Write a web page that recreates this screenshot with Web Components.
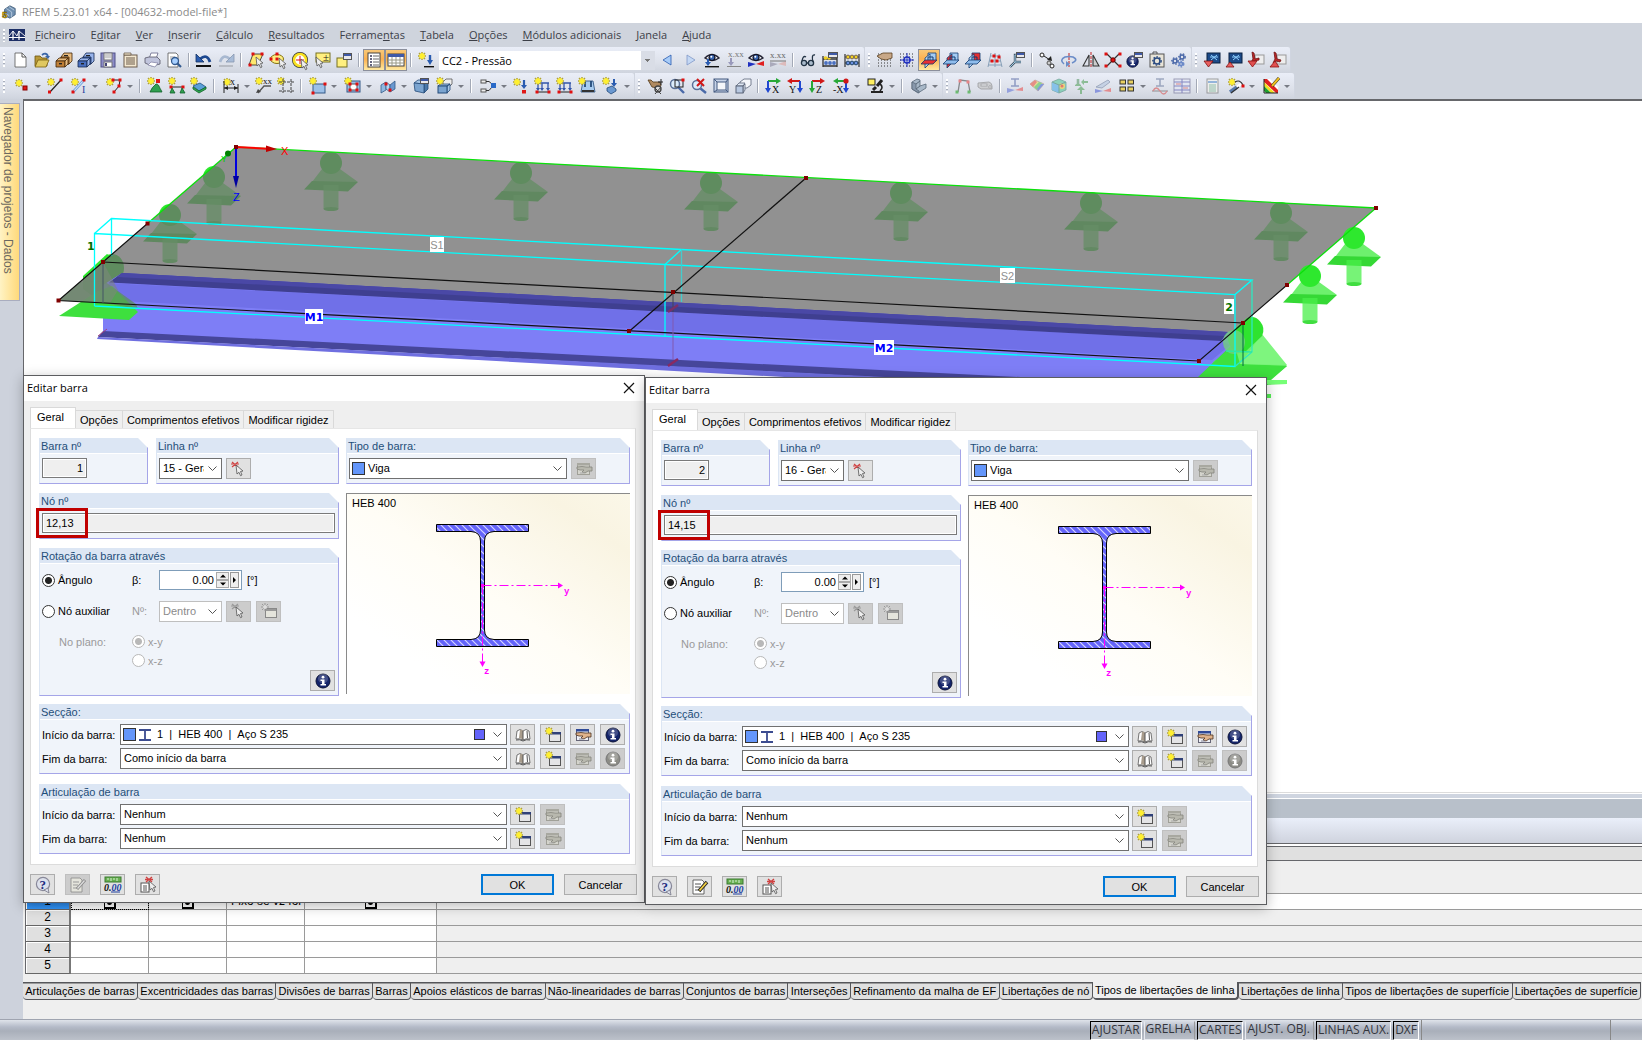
<!DOCTYPE html>
<html lang="pt">
<head>
<meta charset="utf-8">
<title>RFEM 5.23.01 x64 - [004632-model-file*]</title>
<style>
html, body { margin: 0; height: 100%; }
body { font: 11px/14px "Liberation Sans", Arial, sans-serif; color: #000; overflow: hidden; }
</style>
</head>
<body>
<rfem-app></rfem-app>
<script>
/* ---------- icon drawing helpers (16 x 16 grid) ---------- */
const R = (x, y, w, h, f, s = 'none', sw = 1) => `<rect x="${x}" y="${y}" width="${w}" height="${h}" fill="${f}" stroke="${s}" stroke-width="${sw}"/>`;
const P = (d, s, w = 1, f = 'none', e = '') => `<path d="${d}" fill="${f}" stroke="${s}" stroke-width="${w}" ${e}/>`;
const F = (d, f, s = 'none') => `<path d="${d}" fill="${f}" stroke="${s}" stroke-width=".8"/>`;
const C = (x, y, r, f, s = 'none', w = 1) => `<circle cx="${x}" cy="${y}" r="${r}" fill="${f}" stroke="${s}" stroke-width="${w}"/>`;
const star = (x = 4, y = 4) => `<g transform="translate(${x} ${y})">${P('M0-4V4M-4 0H4M-3-3L3 3M3-3L-3 3', '#b0a238', 1.5)}${P('M0-3V3M-3 0H3M-2-2L2 2M2-2L-2 2', '#fff030', 1.6)}</g>`;
const dot = (x, y, f = '#e01010') => R(x - 1.5, y - 1.5, 3, 3, f);
const cursor = (x = 8, y = 5) => `<path transform="translate(${x} ${y})" d="M0 0L7 6L4.5 6.5L6 10L4.5 10.7L3 7.3L1 9Z" fill="#eee" stroke="#555" stroke-width=".8"/>`;
const T = (x, y, t, f, s = 8) => `<text x="${x}" y="${y}" fill="${f}" font-family="Liberation Serif,serif" font-size="${s}">${t}</text>`;
const grid = c => P('M1 2H16M1 5H16M1 8H16M1 11H16M1 14H16', c, 1, 'none', 'stroke-dasharray="1 2"');
const cabinet = (a, b, d) => F('M5 5L8 1H16V9L13 12H5Z', a, d) + F('M5 5H13V12H5Z', b, d) + F('M0 9L3 6H12L10 9Z', a, d) + F('M0 9H9V15H0Z', b, d) + F('M9 9L12 6V12L9 15Z', a, d) + R(8, 3, 4, 1.2, '#222') + R(3, 11, 3, 1.4, '#222');
const eye = P('M1 6Q8-1 15 6Q8 11 1 6Z', '#223', 1.4, '#fff') + C(8, 5.5, 3, '#3a66b0', '#112', 1.2) + C(7.3, 4.8, 1, '#fff');
const planes = (red = '') => F('M7 1H15V9H7Z', red === 'c' ? '#e83030' : '#a4ccf4', '#123a70') + F('M4 6L9 2V11L4 16Z', red === 'b' ? '#e83030' : '#b8daf8', '#123a70') + F('M0 12L4 8H16L12 12Z', red === 'a' ? '#e83030' : '#8ebcec', '#123a70') + P('M7 8V5H12V8', '#123a70');
const win = (x, y, w, h) => R(x + .5, y + .5, w, h, '#e8e8ec', '#555') + R(x + 1, y + 1, w - 1, 2, '#3f5aa8');
const loads = P('M2 5H14M3 5V11M7 5V11M13 5V11', '#3355aa', 1.3) + F('M1 10H5L3 13ZM5 10H9L7 13ZM11 10H15L13 13Z', '#3355aa') + P('M1 14H15', '#222') + dot(2, 14) + dot(14, 14);
const info = (a, b) => C(8, 8, 7, a, b) + `<circle cx="8" cy="5.5" r="5" fill="#fff" opacity=".2"/>` + C(8, 4.2, 1.4, '#fff') + F('M5.5 6.5H9.5V11H11V12.5H5.5V11H7V8H5.5Z', '#fff');
const gear = (x, y, r, f) => C(x, y, r, 'none', f, 1.6) + `<circle cx="${x}" cy="${y}" r="${r + 1.2}" fill="none" stroke="${f}" stroke-width="1.3" stroke-dasharray="1.6 1.5"/>`;
const hand = g => R(1.5, 2.5, 12, 11, g ? '#d4d4cc' : '#eef0f6', g ? '#a0a098' : '#667') + R(1, 2, 13, 2.5, g ? '#a8a8a0' : '#2f4a98') + F('M1 6L6 5.500L10 6L16 6V10L12 10L9 12L6 11L8 9L4 9L1 8Z', g ? '#b8b8ae' : '#e0b48c', g ? '#84847c' : '#4a3020') + P('M4 12H8', g ? '#aaa' : '#889');
const axes = (t, c1, c2) => P('M3 3H14', c1, 2) + F('M11 0L16 3L11 6Z', c1) + P('M3 3V13', c2, 2) + F('M0 10H6L3 15Z', c2) + T(7, 15, t, '#111', 10);

const ICONS = {
  app: F('M3 5L9 1L15 4V11L9 15L3 12Z', '#6f8fb0', '#34506c') + P('M5 4L11 8V14M8 2L14 6M3 9L8 12', '#b8cce0') + `<text x="0" y="15" fill="#f4c800" stroke="#443800" stroke-width=".5" font-family="Liberation Sans" font-weight="bold" font-size="11">5</text>`,
  bridge: R(0, 2, 16, 12, '#1d2f66') + P('M0 10.500H16M4 4V13M10 4V13', '#fff', 1.2) + P('M0 9L4 4L8 9L10 4L16 9', '#fff', .9),
  doc: F('M3 1H10L14 5V15H3Z', '#fff', '#555') + P('M10 1V5H14', '#555'),
  open: F('M1 4H6L8 6H13V14H1Z', '#b89838', '#6a5410') + F('M1 15L4 8H15L12 15Z', '#e0c860', '#7a6010') + P('M8 3Q12 0 14 4', '#3a66a8', 1.8) + F('M11 4H16L14 7Z', '#3a66a8'),
  cabB: cabinet('#e8bc80', '#c08038', '#402408'), cabU: cabinet('#98b4ec', '#4a70c0', '#142850'),
  save: R(1, 1, 14, 14, '#8c8cc8', '#505088') + R(4, 1, 8, 7, '#eee', '#777') + P('M5 3H11M5 5H11', '#aaa') + R(4, 10, 8, 5, '#fff', '#777') + R(5, 11, 2, 3, '#447'),
  notes: R(2, 3, 13, 12, '#f4e8d0', '#6a5a4a') + F('M2 3V1H9V3Z', '#f4e8d0', '#6a5a4a') + P('M4 6H13M4 8H13M4 10H13M4 12H13', '#6a5a4a'),
  print: F('M5 7L7 1H14L12 7Z', '#fff', '#668') + F('M1 6L5 5H13L16 8V12L8 14L1 11Z', '#c0c4dc', '#556') + F('M7 10L14 11L11 15L4 13Z', '#fff', '#88a'),
  preview: F('M2 1H10L12 3V15H2Z', '#fff', '#555') + P('M4 5H9M4 7H8', '#999') + C(9, 9, 3.5, '#a8d0ff', '#335a90', 1.3) + P('M11 11L15 15', '#335a90', 2.2),
  undo: P('M4 7Q11 1 14 10', '#1c4890', 2.8) + F('M0 2V10H8Z', '#2a5cb0', '#123060') + R(0, 13, 15, 2, '#111'),
  redo: P('M12 7Q5 1 2 10', '#a8b8d0', 2.6) + F('M16 2V10H8Z', '#a8bcd8', '#8898b0') + R(1, 13, 14, 2, '#b8bcc4'),
  selpar: F('M5 2H15L10 13H1Z', '#ffe870', '#222') + dot(5, 2) + dot(14, 2) + dot(2, 13) + cursor(8, 5),
  selell: `<ellipse cx="7" cy="7" rx="6.5" ry="4.5" fill="#ffee80" stroke="#807010"/>` + dot(1, 7) + dot(7, 2) + dot(7, 7) + cursor(9, 6),
  selring: C(8, 8, 6, 'none', '#333', 4) + C(8, 8, 6, '#fff', '#f8e020', 2.6) + P('M8 4V12M4 8H12', '#e01010') + cursor(9, 7),
  selrect: R(2, 1, 14, 9, '#fff080', '#777020') + T(9, 9, '±', '#111', 11) + cursor(2, 5),
  selwin: R(1, 6, 10, 9, '#fff080', '#777020') + win(7, 1, 8, 6),
  panelA: R(2, 1, 12, 14, '#fff', '#444') + P('M4 4H6M4 7H6M4 10H6M4 13H6', '#335', 1.4) + P('M7 4H13M7 7H13M7 10H13M7 13H13', '#666'),
  panelB: R(0, 2, 16, 12, '#fff', '#444') + R(0, 2, 16, 3, '#3f5aa8') + P('M0 8H16M0 11H16M4 5V14M8 5V14M12 5V14', '#998'),
  newload: star(4, 4) + P('M12 3V10', '#2a5cb0', 2.4) + F('M9 8H15L12 13Z', '#2a5cb0') + R(6, 14, 10, 1.4, '#111'),
  prev: F('M11 3V13L3 8Z', '#a8ccf8', '#2a5cb0'), next: F('M5 3V13L13 8Z', '#c4d8f4', '#8098c8'),
  eyeload: eye + P('M4 7V12', '#2a5cb0', 2) + F('M1 10H7L4 14Z', '#2a5cb0') + R(1, 14, 14, 1.4, '#111'),
  xxxload: T(2, 5, 'x.xx', '#777', 9) + P('M5 6V12', '#99b', 2) + F('M2 10H8L5 14Z', '#99b') + R(1, 14, 14, 1, '#888'),
  eyeres: eye + F('M0 10V15L8 12Z', '#2030c0') + F('M8 12L16 9V14Z', '#e02020'),
  xxxres: T(0, 6, 'x.xx', '#666', 9) + F('M0 10V15L8 12Z', '#aab') + F('M8 12L16 9V14Z', '#dbb') + P('M0 9H16', '#777'),
  glasses: C(4, 11, 2.6, '#abc', '#234', 1.3) + C(11, 11, 2.6, '#abc', '#234', 1.3) + P('M2 9Q3 3 6 5M13 10Q11 2 15 3M6 11H9', '#234', 1.3),
  abac1: P('M1 4V15M15 6V15M1 7H15M1 14H15', '#333', 1.3) + C(3.5, 6, 1.8, '#f0d020') + C(7, 6, 1.8, '#f0d020') + C(4, 11, 1.9, '#4a70c0') + C(8, 11, 1.9, '#4a70c0') + C(12, 11, 1.9, '#4a70c0') + win(6, 0, 9, 5),
  abac2: P('M1 2V15M15 2V15M1 5H15M1 11H15', '#333', 1.2) + C(4, 5, 1.9, '#f0d020', '#765') + C(8, 5, 1.9, '#f0d020', '#765') + C(12, 5, 1.9, '#f0d020', '#765') + C(4, 11, 1.9, '#6a90e0', '#246') + C(8, 11, 1.9, '#6a90e0', '#246') + C(12, 11, 1.9, '#6a90e0', '#246'),
  handgrid: grid('#333') + F('M0 4L6 1L15 1V6L9 8L4 7Z', '#c8a888', '#5a4020'),
  snap: grid('#333') + C(8, 8, 3, '#e8eef8', '#2030c0', 1.6) + P('M8 1V15M1 8H15', '#2030c0'),
  plA: planes('a'), plB: planes('b'), plC: planes('c'),
  gridp: P('M4 1L1 15M8 1V15M12 2L15 15M3 4H13M2 9H14M1 13H15', '#88a0b8') + dot(7, 4) + dot(5, 9) + dot(10, 9) + dot(12, 5),
  wrench: P('M1 15L6 10V3H9M6 10H12', '#456', 2.4) + P('M1 15L6 10V3H9M6 10H12', '#9bc8e0', 1) + win(7, 0, 8, 5),
  mvcopy: C(3, 3, 2, '#fff', '#222') + P('M5 4L11 8', '#222') + F('M13 9L8 8L12 4Z', '#222') + C(10, 11, 2, '#ccc', '#555') + C(13, 14, 2, '#fff', '#222'),
  rotate: P('M8 1V15', '#c02020', 1, 'none', 'stroke-dasharray="3 1"') + P('M3 12Q-2 8 4 5Q8 4 12 5Q18 8 11 11', '#6a8cc8', 1.6) + F('M5 9V15L9 12Z', '#6a8cc8'),
  mirror: P('M8 0V16', '#c02020', 1, 'none', 'stroke-dasharray="3 1"') + P('M0 14L6 3V14Z', '#333', 1.1) + P('M16 14L10 3V14Z', '#333', 1.1, '#ccc'),
  xlines: P('M2 2L14 14M14 2L2 14', '#333', 1.2) + dot(1, 2) + dot(15, 2) + dot(1, 14) + dot(15, 14) + C(8, 8, 2.2, '#e01010', '#600'),
  infow: `<g transform="translate(-1 3) scale(.82)">${info('#14246a', '#0a1238')}</g>` + win(7, 0, 8, 5),
  camera: R(1, 2, 14, 13, '#e8e4d8', '#555') + P('M4 2V0H8V2', '#555') + gear(8, 9, 3, '#2a4a80'),
  gears: gear(4, 9, 2, '#4a68a8') + gear(11, 5, 2, '#4a68a8') + gear(10, 12, 1.6, '#6a88c8'),
  scrA: R(3, 1, 13, 10, '#1c4a88', '#0a2040') + P('M7 3L13 8M13 3L7 8M6 5H14', '#8fd0ff') + F('M0 9H9L4.500 15Z', '#e86060', '#801010'),
  scrB: R(3, 1, 13, 10, '#1c4a88', '#0a2040') + P('M7 3L13 8M13 3L7 8M6 5H14', '#8fd0ff') + F('M0 15H8L4 10Z', '#e86060', '#801010'),
  pdfA: R(7, 3, 9, 9, '#eee', '#999') + F('M4 0L6 1L7 7L11 6L11 8L6 9L3 10L5 7Z', '#c02828', '#701010') + F('M0 9H9L4.500 15Z', '#e05050', '#901010'),
  pdfB: R(7, 3, 9, 9, '#eee', '#999') + F('M4 0L6 1L7 7L11 8L10 10L6 9L3 11L5 7Z', '#c02828', '#701010') + F('M0 15H9L5 9Z', '#e05050', '#901010'),

  node: star(5, 5) + R(9, 8, 4, 4, '#e01818', '#800'),
  line: star() + P('M3 14L14 2', '#222', 1.2) + dot(2.5, 14) + dot(14, 2),
  member: star() + P('M2 14L13 2', '#7aa8e0', 2.6) + P('M2 14L13 2', '#fff', .8) + dot(2, 14) + dot(13, 2) + T(11, 15, 'I', '#2040a0', 10),
  polyl: star() + P('M7 2H14L13 8L8 14', '#222') + dot(7, 2) + dot(14, 2) + dot(13, 8) + dot(8, 14),
  nsup: star(4, 3) + R(9, 1, 4, 4, '#e01818') + F('M9 6C12 6 12 9 14 12L15 14H3Q5 9 9 6Z', '#30a050', '#106028'),
  lsup: star(3, 3) + P('M3 9H14', '#222') + dot(2, 9) + dot(14, 9) + F('M1 15L3 10L6 15ZM11 15L13 10L16 15Z', '#30a050', '#106028'),
  ssup: star(3, 3) + F('M2 8L9 5L15 9L8 13Z', '#5aa0d8', '#205080') + F('M2 9L8 13L15 9V11L8 15L2 11Z', '#30b050', '#106028'),
  dim: star(4, 4) + P('M1 3V15M15 6V15M1 10H15', '#222') + F('M1 10L5 8V12ZM15 10L11 8V12Z', '#222') + T(7, 7, 'x', '#111', 10),
  slope: star(3, 3) + T(7, 6, 'xx', '#111', 9) + P('M15 8L8 8L2 15', '#555', 1.3) + F('M0 15L2 11L5 14Z', '#444'),
  guides: star(3, 3) + P('M5 1V15M13 1V15M1 4H16M1 13H16', '#444', 1, 'none', 'stroke-dasharray="3 1"'),
  surf: R(3, 6, 12, 9, '#9cc0e8', '#345a88') + star(3, 3) + dot(15, 6) + dot(3, 15),
  opening: R(2, 3, 13, 11, '#9cc0e8', '#345a88') + R(5, 6, 7, 6, '#fff', '#555') + star(3, 3) + dot(5, 6) + dot(12, 6) + dot(5, 12) + dot(12, 12),
  inters: F('M1 7L6 4V12L1 15Z', '#8fb8e0', '#345a88') + F('M6 4L10 7V14L6 11Z', '#b8d4f0', '#345a88') + F('M10 7L15 3V11L10 14Z', '#6a98d0', '#345a88') + dot(6, 6) + dot(10, 12),
  solid: F('M1 5L5 2H15L11 6Z', '#a8c8e8', '#234a78') + F('M11 6L15 2V11L11 15Z', '#4a78a8', '#234a78') + F('M1 5L11 6V15L2 13Z', '#7aa4d0', '#234a78') + win(7, 0, 8, 5),
  solidset: F('M6 4L9 1H15V6L12 9H6Z', '#eee', '#555') + F('M1 8L3 6H13L10 8ZM10 8L13 6V12L10 15Z', '#a8c8e8', '#234a78') + R(1, 8, 9, 7, '#7aa4d0', '#234a78') + star(3, 3),
  combo1: R(1, 2, 5, 3, '#eee', '#555') + R(1, 11, 5, 3, '#eee', '#555') + P('M6 3.5H9L12 6M6 12.5H9L12 9', '#333') + R(11, 5, 5, 5, '#2a6ac8'),
  nload: star(4, 4) + P('M11 2V9', '#2a5cb0', 2.2) + F('M8 7H14L11 11Z', '#2a5cb0') + R(9, 12, 4, 3.5, '#e01818'),
  mload: loads + star(3, 3), lload: loads + star(3, 3),
  sload: F('M4 3H14L16 14H2Z', '#a8ccf0', '#234a78') + P('M6 3V9M12 3V9', '#234a78', 1.8) + R(3, 12, 12, 2, '#333') + star(3, 3),
  bload: star(3, 3) + P('M11 1V6', '#2a5cb0', 2) + F('M8 5H14L11 9Z', '#2a5cb0') + F('M4 10L9 8L13 11V13L8 16L4 13Z', '#6a98d0', '#234a78'),
  pan: F('M1 2L4 2L6 4L13 4L14 8L11 10L5 9Z', '#b08a60', '#503818') + P('M14 1V7M11 4H16', '#222') + C(11, 11, 3, '#ddd', '#444', 1.4) + P('M7 9L14 16M14 9L8 16', '#444'),
  zoomw: C(6, 6, 4.5, '#dcecfc', '#5a7098', 1.5) + P('M9.5 9.5L15 15', '#4a6aa8', 2.4) + R(6, 2, 8, 7, 'none', '#222') + dot(14, 2),
  zoomx: C(6, 7, 4.5, '#dcecfc', '#5a7098', 1.5) + P('M9.5 10.5L15 15', '#4a6aa8', 2.4) + P('M6 1L13 8M13 1L6 8', '#d01818', 2),
  persp: R(1, 1, 14, 13, '#c8d4e8', '#445a80') + R(4, 4, 9, 8, '#f4f6fa', '#445a80') + P('M1 1L4 4M15 1L13 4M1 14L4 12M15 14L13 12', '#445a80'),
  layers: F('M5 4L9 1H16V7L12 10H5Z', '#f4f6fa', '#5a6478') + F('M1 8L4 5H10L8 8ZM8 8L10 6V12L8 15Z', '#e0e8f4', '#5a6478') + R(1, 8, 7, 7, '#b8c8e0', '#5a6478'),
  vx: axes('X', '#28a838', '#2048d0'),
  vy: P('M3 3H13', '#d01818', 2) + F('M5 0L0 3L5 6Z', '#d01818') + P('M13 3V13', '#2048d0', 2) + F('M10 10H16L13 15Z', '#2048d0') + T(2, 15, 'Y', '#111', 10),
  vz: axes('Z', '#d01818', '#28a838'),
  vmx: P('M3 3H13', '#28a838', 2) + F('M5 0L0 3L5 6Z', '#28a838') + P('M13 3V13', '#2048d0', 2) + F('M10 10H16L13 15Z', '#2048d0') + C(13, 3, 2.6, '#d01818') + T(0, 15, '-X', '#111', 10),
  micro: R(0, 1, 7, 6, '#fff060', '#222') + P('M14 2L9 8M8 9L5 12', '#222', 3) + R(3, 13, 12, 2, '#222') + P('M12 6Q16 9 12 13', '#222', 1.6),
  section3d: F('M1 4L6 1L9 2V8L15 6V10L7 15L1 11Z', '#a8b8c8', '#5a6a7a') + F('M1 4L5 6V11L8 13V15L1 11Z', '#8898ac', '#5a6a7a') + P('M5 6L9 3M5 11L9 8', '#5a6a7a'),
  frame: P('M3 14L5 2L13 3L15 14', '#555', 1.3) + dot(5, 3, '#e85050') + dot(13, 4, '#e85050') + dot(2, 14, '#3a3') + dot(14, 14, '#3a3'),
  tape: F('M1 5L12 4Q15 5 15 8V11H4L1 9Z', '#c4c4c4', '#777') + R(4, 6, 6, 2, '#f4f4f4', '#888') + C(13, 9, 1.3, '#eee', '#888'),
  resI: P('M4 1H12M4 8H12M8 1V8', '#6a7ab0', 1.6) + F('M0 10V15L8 12Z', '#7080d8') + F('M8 12L16 9V13Z', '#e86060'),
  rainbow: F('M1 6L6 2L15 6L9 13Z', '#f0d860', '#a88') + F('M1 6L6 2L8 4L4 9Z', '#e86050') + F('M5 9L10 4L13 5L8 12Z', '#60c860') + F('M9 13L15 6L12 6L8 11Z', '#5070d8'),
  cubeR: F('M1 4L8 1L15 4V12L8 15L1 12Z', '#60c8a0', '#487') + F('M1 4L8 7V15L1 12Z', '#58b0e8') + C(11, 8, 3, '#f0d040') + C(11, 8, 1.5, '#e04030') + P('M8 7V15M1 4L8 7L15 4', '#487'),
  reac: P('M5 1V7', '#6aa078', 2.6) + F('M2 7Q5 4 8 7V8H2Z', '#60a868') + F('M8 8L12 12H9V16H7V12H4Z', '#60a868') + F('M8 4L11 1V3H15V5H11V7Z', '#60a868'),
  resl: F('M1 9L13 2L15 4L7 10Z', '#b8c8e0', '#6a7a98') + F('M0 11V15L8 13Z', '#6070d8') + F('M8 13L16 10V14Z', '#e86060'),
  quad: [[1, 2], [9, 2], [1, 9], [9, 9]].map(a => R(a[0], a[1], 5.5, 4, '#e8d060', '#333')).join(''),
  resw: P('M4 1H12M4 8H12M8 1V8', '#7a88a8', 1.6) + P('M0 13H16', '#666') + P('M1 13Q4 7 8 13T15 13', '#d86060', 1.3),
  tabl: R(0, 1, 16, 14, '#e4e8f4', '#779') + P('M0 4H16M0 8H16M0 12H16M8 1V15', '#55a') + P('M2 6H7M9 10H14', '#d88', 1.4),
  report: R(3, 1, 11, 14, '#f4f4ec', '#777') + R(4, 3, 9, 2, '#6a9ad0') + P('M5 7H12M5 9H12M5 11H12M5 13H12', '#6a8'),
  brush: star() + P('M2 14L9 9', '#5a7aa8', 3.4) + P('M9 9L13 6', '#fff', 2.4) + P('M7 4Q12 1 15 7M3 15L11 9', '#333', 1.2) + dot(15, 8),
  spectrum: R(1, 1, 14, 14, '#fff') + F('M1 1H4L15 12V15H13L1 4Z', '#e02020') + F('M1 4L12 15H8L1 8Z', '#f0e020') + F('M1 8L8 15H3L1 13Z', '#20a030') + F('M7 1H16V10Z', '#e8ecf4') + P('M1 1V15H15', '#222') + P('M16 0L9 8', '#222', 3) + P('M16 0L9 8', '#f0c020', 2),

  pick: P('M1 1L7 6M7 1L1 6M0 3H8', '#d04040', 1.1) + cursor(5, 4),
  pickG: P('M1 1L7 6M7 1L1 6M0 3H8', '#999', 1.1) + cursor(5, 4),
  hand: hand(false), handG: hand(true),
  neww: R(4.5, 5.5, 11, 9, '#e4e4e6', '#555') + R(4, 5, 12, 2.5, '#2f4078') + star(4, 4),
  newwG: R(4.5, 5.5, 11, 9, '#e4e4dc', '#888') + R(5, 6, 10, 2, '#999') + P('M4 0V8M0 4H8M1 1L7 7M7 1L1 7', '#999') + C(4, 4, 2, '#ddd'),
  book: F('M1 12L2 4Q5 1 8 4Q11 1 14 4L15 12Q11 11 8 13Q5 11 1 12Z', '#fff', '#555') + F('M8 4Q7 2 5 3L4 11Q6 11 8 13Z', '#a89c8c') + P('M8 4V13', '#555') + P('M12 4L12.500 11M1 13Q5 12 8 14Q11 12 15 13', '#555'),
  info: info('#14246a', '#0a1238'), infoG: info('#8c8c86', '#777'),
  help: C(8, 7, 6.6, '#dce0ec', '#889', 1.2) + F('M9 13L14 16L13 11Z', '#dce0ec', '#778') + `<text x="4.500" y="11.500" fill="#1c2c80" font-family="Liberation Serif" font-weight="bold" font-size="13">?</text>`,
  edit: F('M1 1H10L12 3V15H1Z', '#fff', '#444') + P('M3 5H9M3 8H8M3 11H7', '#555') + P('M7 12L15 3', '#222', 3.4) + P('M7.5 11.5L14.5 3.5', '#f4d040', 1.8),
  editG: F('M1 1H10L12 3V15H1Z', '#e4e4dc', '#888') + P('M3 5H9M3 8H8M3 11H7', '#999') + P('M7 12L15 3', '#888', 3) + P('M7.5 11.5L14.5 3.5', '#ddd', 1.4),
  units: R(0, 0, 16, 5, '#68b050', '#3a7a30') + P('M3 1V3M6 1V4M9 1V3M12 1V4', '#d8f0d8') + `<text x="-1" y="14" fill="#111" font-family="Liberation Serif" font-style="italic" font-weight="bold" font-size="10">0.<tspan fill="#2040a0">00</tspan></text>` + P('M6 15H15', '#2040a0'),
  pickdoc: R(1, 6, 8, 9, '#fff', '#555') + P('M3 9H7M3 11H7M3 13H7', '#555') + P('M6 0L12 5M12 0L6 5M5 2.5H13', '#d04040', 1.3) + cursor(9, 4)
};

/* ---------- base class ---------- */
class Base extends HTMLElement {
  constructor() { super(); this.attachShadow({ mode: 'open' }); }
  connectedCallback() { if (!this.shadowRoot.hasChildNodes()) this.shadowRoot.innerHTML = this.view(); }
}
const def = (n, f) => customElements.define(n, class extends Base { view() { return f(this); } });

def('ui-icon', e => `<style>:host{display:block;width:18px;height:18px;flex:none}svg{display:block;width:100%;height:100%;overflow:visible}</style>
<svg viewBox="-1 -1 18 18" aria-hidden="true">${ICONS[e.getAttribute('name')] || ''}</svg>`);

/* ---------- frame: title, menu, toolbars ---------- */
def('title-bar', () => `<style>:host{display:flex;align-items:center;height:23px;gap:5px;background:#fff;color:#8a8a8a;font:11px/16px "Open Sans",sans-serif}
ui-icon{width:16px;height:16px;margin-left:1px}</style><ui-icon name="app"></ui-icon><span><slot></slot></span>`);

def('menu-bar', () => {
  const m = [['', 'F', 'icheiro'], ['E', 'd', 'itar'], ['', 'V', 'er'], ['', 'I', 'nserir'], ['', 'C', 'álculo'], ['', 'R', 'esultados'], ['Ferrame', 'n', 'tas'], ['', 'T', 'abela'], ['', 'O', 'pções'], ['', 'M', 'ódulos adicionais'], ['', 'J', 'anela'], ['', 'A', 'juda']];
  return `<style>:host{display:flex;align-items:center;height:24px;background:#cfd4dd}
.grip{width:2px;height:13px;margin:0 3px 0 3px;background:repeating-linear-gradient(#fff 0 2px,#b4bac6 2px 3px,#cfd4dd 3px 4px)}
ui-icon{margin-right:2px}nav{display:flex}
button{border:0;background:none;margin:0;padding:0 8px 0 7px;font:11px/20px "Open Sans",sans-serif;color:#3c3f48}</style>
<div class="grip"></div><ui-icon name="bridge"></ui-icon><nav>${m.map(a => `<button>${a[0]}<u>${a[1]}</u>${a[2]}</button>`).join('')}</nav>`;
});

/* items: "|" separator, "name" button, "name+" split button, "name*" pressed, "name-" dimmed */
def('tool-group', e => {
  const one = t => {
    if (t === '|') return '<i class="sep"></i>';
    if (t === 'CASE') return '<select aria-label="Caso de carga"><option>CC2 - Pressão</option></select>';
    const n = t.replace(/[+*\-]+$/, ''), k = t.slice(n.length);
    const cls = (k.includes('+') ? 'split ' : '') + (k.includes('*') ? 'on ' : '') + (k.includes('-') ? 'dim' : '');
    return `<button class="${cls}" aria-label="${n}"><ui-icon name="${n}"></ui-icon>${k.includes('+') ? '<b></b>' : ''}</button>`;
  };
  return `<style>:host{display:flex;align-items:center;height:26px;box-sizing:border-box;padding-right:1px;border-right:1px solid #d0d5e0;border-radius:0 3px 3px 0;background:linear-gradient(#eaeef8,#dde1ea 60%,#cfd4de)}
.grip{width:2px;height:14px;margin:0 4px 0 3px;background:repeating-linear-gradient(#fff 0 2px,#a9afbc 2px 3px,transparent 3px 4px)}
button{display:flex;align-items:center;justify-content:center;box-sizing:border-box;width:22px;height:22px;margin:0;padding:0;border:1px solid transparent;background:none;flex:none}
.split{width:35px;justify-content:flex-start;padding-left:3px;gap:4px}
.on{border-color:#8b8f9c;background:linear-gradient(#f8c878,#fbb050 45%,#ffe9a0)}
.dim ui-icon{opacity:.65}
b{border:3px solid transparent;border-top-color:#777b84;border-bottom:0}
.sep{width:1px;height:14px;margin:0 4px 0 3px;background:#a3a9b6;box-shadow:1px 0 #fff}
select{appearance:none;width:216px;height:19px;margin:0 2px;border:0;border-radius:0;padding:0 20px 0 3px;font:11px/19px "Open Sans",sans-serif;color:#000;
background:linear-gradient(#777,#777) right 6px top 9px/3px 1px no-repeat,linear-gradient(#777,#777) right 5px top 8px/5px 1px no-repeat,linear-gradient(#777,#777) right 7px top 10px/1px 1px no-repeat,linear-gradient(90deg,#fff 202px,#d9dde6 202px)}</style>
<div class="grip"></div>${e.getAttribute('items').split(' ').map(one).join('')}`;
});

def('tool-area', () => `<style>:host{display:block;background:#cfd4dd}div{display:flex}</style>
<div><tool-group items="doc open cabB cabU save notes print preview | undo redo | selpar selell selring selrect selwin | panelA* panelB* | newload CASE prev next eyeload xxxload eyeres xxxres | glasses abac1 abac2"></tool-group>
<tool-group items="handgrid snap plA* plB plC gridp wrench | mvcopy rotate mirror xlines infow camera gears"></tool-group>
<tool-group items="scrA scrB pdfA pdfB"></tool-group></div>
<div><tool-group items="node+ line member+ polyl+ | nsup lsup ssup | dim+ slope guides | surf+ opening+ inters+ solid solidset+ | combo1+ nload mload lload sload bload+"></tool-group>
<tool-group items="pan zoomw zoomx persp layers | vx vy vz vmx+ micro+ | section3d+"></tool-group>
<tool-group items="frame- tape- | resI- rainbow- cubeR- reac- resl- quad+ resw- tabl- | report- brush+ spectrum+"></tool-group></div>`);

/* ---------- side strip ---------- */
def('side-strip', () => `<style>:host{display:block;width:23px;flex:none;background:#cdd2dc}
button{display:block;box-sizing:border-box;margin:4px 0 0;width:20px;height:198px;border:1px solid #a9adbf;border-left:0;padding:3px 4px 0 0;text-align:left;background:linear-gradient(90deg,#fff3c4,#ffd97a);writing-mode:vertical-rl;font:12px/15px "Liberation Sans",sans-serif;color:#6c6860}</style>
<button><slot></slot></button>`);

/* ---------- model view ---------- */
def('model-view', () => {
  const sup = (x, y) => `<g transform="translate(${x} ${y})"><path d="M-9 6H9L27 19H-19Z" fill="#6ef06e"/><path d="M-19 18L27 19L17 28.500L-27 26.500Z" fill="#35d835"/><rect x="-7.500" y="22" width="15" height="24" fill="#4aef4a" opacity=".75"/><ellipse cx="0" cy="46" rx="7.500" ry="2" fill="#40dd40"/><circle r="11" fill="#2ee82e"/></g>`;
  const L = (a, c, w = 1.3) => `<polyline points="${a}" fill="none" stroke="${c}" stroke-width="${w}"/>`;
  const n = (x, y) => `<rect x="${x - 2}" y="${y - 2}" width="4" height="4" fill="#800000"/>`;
  const tag = (x, y, w, t, c, b) => `<rect x="${x}" y="${y}" width="${w}" height="15" fill="#fff"/><text x="${x + w / 2}" y="${y + 12}" text-anchor="middle" fill="${c}" class="${b ? 'b' : ''}">${t}</text>`;
  const top = [0, 1, 2, 3, 4, 5].map(i => sup(331 + 190 * i, 163 + 10 * i)).join('');
  return `<style>:host{display:block;flex:1;min-height:0;box-sizing:border-box;border:solid #66676b;border-width:2px 0 0 1px;background:#fff;overflow:hidden}svg{display:block;width:100%;height:100%}text{font:11px "Liberation Sans",sans-serif}.b{font:bold 11px "DejaVu Sans",sans-serif}</style>
<svg viewBox="24 101 1618 691" preserveAspectRatio="xMinYMin slice">
${sup(214, 177)}${sup(170, 215)}${top}
<ellipse cx="112" cy="268" rx="12" ry="14" fill="#2ee82e"/><path d="M83 289V276L107 254L120 262V275L97 299Z" fill="#2ee82e"/>
<path d="M236 147L1376 208L1199 361L58.500 300.500Z" fill="#6e6e6e" fill-opacity=".76"/>
<path d="M122 273L1228 332L1240 345L1215 390L1200 388L103 336V285Z" fill="#7e7ef6"/>
<path d="M109 283L1222 341L1230 345L1212 360L103 300Z" fill="#7070e8"/>
<path d="M122 273L1228 332L1221 341L109 282.500Z" fill="#3f3f90"/>
<path d="M122 273L1228 332L1224 336L117 277Z" fill="#4a48a6"/>
<path d="M103 331L1200 386V394L98 337Z" fill="#46469a"/><path d="M98 337L1200 393V400L97 339Z" fill="#6f6fe0"/>
<path d="M98 291L112 286L138 312L129 320L59 316Z" fill="#3ee03e"/>
<path d="M59 300L80 282L104 281L136 304L138 309L103 303Z" fill="#5c8f5c" opacity=".75"/>
<path d="M58.500 300.500L103 262L118 290L110 303Z" fill="#7d857d" opacity=".55"/>
${L('236,147 147.500,223.500', '#0be00b')}${L('236,147 1376,208', '#0be00b')}
${sup(1354, 238)}${sup(1310, 276)}
<path d="M1214 361L1260 335L1287 366L1270 380L1262 384H1266L1287 380V384L1267 385V398H1192Z" fill="#5cf05c" opacity=".9"/>
<path d="M1198 377L1234 343L1240 364L1287 366L1271 380L1262 392H1190Z" fill="#3ee03e"/>
<path d="M1240 364L1262 334L1287 365Z" fill="#7ef57e"/>
<path d="M1230 333L1247 318A12 13 0 0 1 1262 336L1245 352A14 13 0 0 1 1230 333Z" fill="#2fe32f"/><ellipse cx="1234" cy="342" rx="11" ry="12" fill="#72cf80" opacity=".8"/>
<rect x="1266" y="380" width="21" height="4" fill="#76ff76"/><rect x="1266" y="394" width="5" height="4" fill="#55f055"/>
${L('1376,208 1287,285', '#0be00b')}
${L('94.500,306 94.500,233.500 665,264.500 1235,294.500 1235,366.500 94.500,306', '#0ff')}
${L('94.500,233.500 111.500,218.500 681.500,249.500 1252,280 1235,294.500', '#0ff')}
${L('111.500,218.500 111.500,256', '#0ff')}${L('665,336 665,264.500 681.500,249.500', '#0ff')}${L('681.500,249.500 681.500,302', '#4cc')}${L('1252,280 1252,352 1235,366.500', '#2ee8c0')}${L('1252,352 1226,351', '#2ee8a0')}
${L('147.500,223.500 58.500,300.500 1199,361 1287,285', '#111', 1.2)}${L('103,262 1243,323', '#111', 1.2)}${L('806,178 629,331.500', '#111', 1.2)}
${L('103,262 103,303', '#456', 1)}${L('673,292 673,312', '#445', 1)}${L('673,312 673,360', '#8058b0', 1)}${L('1243,323 1243,366', '#064', 1)}
${L('668,312 678,305', '#7a3068', 2.5)}${L('668,366 678,359', '#8a2a60', 2.5)}${L('98,336 107,329', '#a04080', 1)}
${n(147.5, 223.5)}${n(58.5, 300.5)}${n(103, 262)}${n(806, 178)}${n(673, 292)}${n(629, 331)}${n(1199, 361)}${n(1243, 323)}${n(1287, 285)}${n(1376, 208)}
${L('236,147 268,148.700', '#f00', 2)}<path d="M266 145.500L277 149L266 152Z" fill="#c00000"/>
${L('236,147 236,180', '#0000e0', 2)}<path d="M233 176H239L236 188Z" fill="#0000a0"/>
<circle cx="228" cy="153.500" r="3" fill="#008000"/>${n(236, 147)}
<text x="281" y="155" fill="#f00">X</text><text x="233" y="201" fill="#00f">Z</text><text x="221" y="162" fill="#0c0" style="font-size:9px">Y</text>
<text x="87" y="250" fill="#007000" class="b">1</text>
${tag(430, 237, 14, 'S1', '#909090')}${tag(1000, 268, 15, 'S2', '#909090')}${tag(305, 309, 18, 'M1', '#00f', 1)}${tag(874, 340, 20, 'M2', '#00f', 1)}${tag(1224, 299, 10, '2', '#007000', 1)}
</svg>`;
});

/* ---------- dock: table with sheet tabs ---------- */
def('data-grid', () => `<style>:host{display:block;padding-left:2px;background:#efefef}
table{width:100%;table-layout:fixed;border-collapse:separate;border-spacing:0;border-top:1px solid #66676b}
th,td{box-sizing:border-box;height:16px;padding:0;font:12px/15px "Liberation Sans",sans-serif;border-bottom:1px solid #9a9a9a;border-right:1px solid #9a9a9a;text-align:center;overflow:hidden;white-space:nowrap}
td{background:#fff}td:last-child{background:#efefef;border-right:0}tbody tr:first-child td:last-child{background:#fff}
thead tr:first-child th{height:14px;background:#e0e0e0;border-bottom:1px solid #66676b;border-right:0}
thead tr:last-child th{height:33px;border-right:0}
tbody th{background:#e0e0e0;border-right:2px solid #777;border-bottom-color:#666;border-left:1px solid #66676b;box-shadow:inset 1px 1px #fff}
tbody tr:first-child th{background:linear-gradient(#1c6ac0,#3298fe)}
td:nth-child(4){text-align:left;padding-left:4px}td.f{outline:1px dotted #000;outline-offset:-1px}
td div{display:flex;justify-content:center}
input{appearance:none;display:block;box-sizing:border-box;width:12px;height:12px;margin:2px 0 0;border:1px solid #000;border-width:1px 2px 2px 1px;background:radial-gradient(circle at 50% 50%,#000 2px,#fff 3px)}</style>
<table><colgroup><col style="width:46px"><col style="width:78px"><col style="width:78px"><col style="width:78px"><col style="width:132px"><col></colgroup>
<thead><tr><th colspan="6"></th></tr><tr><th colspan="6"></th></tr></thead><tbody>
<tr><th>1</th><td class="f"><div><input type="checkbox" checked aria-label="ux"></div></td><td><div><input type="checkbox" checked aria-label="uy"></div></td><td>Fixo se vz for</td><td><div><input type="checkbox" checked aria-label="phi"></div></td><td></td></tr>
${[2, 3, 4, 5].map(i => `<tr><th>${i}</th><td></td><td></td><td></td><td></td><td></td></tr>`).join('')}</tbody></table>`);

def('sheet-tabs', () => {
  const t = ['Articulações de barras', 'Excentricidades das barras', 'Divisões de barras', 'Barras', 'Apoios elásticos de barras', 'Não-linearidades de barras', 'Conjuntos de barras', 'Interseções', 'Refinamento da malha de EF', 'Libertações de nó', 'Tipos de libertações de linha', 'Libertações de linha', 'Tipos de libertações de superfície', 'Libertações de superfície'];
  return `<style>:host{display:flex;height:18px;margin-top:8px;padding-right:1px;background:#efefef;overflow:hidden}
button{flex:1 1 auto;box-sizing:border-box;height:18px;margin:0;padding:0;border:solid #55565a;border-width:1px 1px 1px 0;border-radius:0 0 4px 4px;background:#e0e0e0;font:11px/16px "Liberation Sans",sans-serif;color:#000;white-space:nowrap;box-shadow:inset 0 1px #9a9a9a}
.on{background:#efefef;border-width:0 2px 2px 0;box-shadow:none}</style>${t.map((x, i) => `<button class="${i === 10 ? 'on' : ''}">${x}</button>`).join('')}`;
});

def('table-dock', () => `<style>:host{display:block;flex:none;background:#efefef;border-top:1px solid #dcdcdc;padding-bottom:19px}
.a{height:4px;background:#cfd5e0;border-top:1px solid #fff;border-bottom:1px solid #fff}
.b{height:19px;background:#b8c0ca}.c{height:25px;background:linear-gradient(#eaeffa,#cfd3de);border-bottom:1px solid #66676b}.d{height:2px;background:#fff}</style>
<div class="a"></div><div class="b"></div><div class="c"></div><div class="d"></div><data-grid></data-grid><sheet-tabs></sheet-tabs>`);

def('status-bar', () => `<style>:host{display:flex;align-items:stretch;height:21px;box-sizing:border-box;border-top:1px solid #9fa4b0;background:linear-gradient(#dfe3ea,#b4bac8 35%,#a9afba 55%,#bcc1ca);font:12px/16px "Open Sans",sans-serif;color:#33353c}
.s{flex:1}span{box-sizing:border-box;height:19px;margin:1px 2px 0 0;padding:0 1px;border:1px solid;border-color:transparent #e8eaf0 #e8eaf0 transparent;white-space:nowrap}
.in{border-color:#000 #fff #fff #000;border-width:1px}.up{border-left-color:#e8eaf0;border-right-color:#999;line-height:14px;padding-right:3px}.r{width:188px;border-left:1px solid #888;border-right:1px solid #888;margin-right:31px}</style>
<div class="s"></div><span class="in">AJUSTAR</span><span class="up">GRELHA</span><span class="in">CARTES</span><span class="up">AJUST. OBJ.</span><span class="in">LINHAS AUX.</span><span class="in">DXF</span><div class="r"></div>`);

/* ---------- dialog parts ---------- */
def('group-box', e => `<style>:host{display:flex;flex-direction:column;box-sizing:border-box;min-height:46px}
h3{margin:0;padding-left:2px;height:15px;flex:none;font:11px/16px "Liberation Sans",sans-serif;color:#1f4e79;background:#dce6f4;clip-path:polygon(0 0,calc(100% - 10px) 0,100% 10px,100% 100%,0 100%);border-right:1px solid #a5a5e8}
.b{flex:1;border:solid #a5a5e8;border-width:0 1px 1px 0;background:#f0f4fa;border-left:1px solid #dce6f4;box-shadow:inset 0 1px #fff;padding:5px 3px 4px 2px}</style>
<h3>${e.getAttribute('label')}</h3><div class="b"><slot></slot></div>`);

def('ui-combo', () => `<style>:host{display:flex;position:relative;height:21px;box-sizing:border-box;border:1px solid #707070;background:#fff}
:host([off]){border-color:#bfbfbf;color:#8a8a8a}
::slotted(select){appearance:none;flex:1;min-width:0;border:0;border-radius:0;margin:0;padding:0 17px 0 3px;background:none;font:inherit;line-height:19px;color:inherit;opacity:1;overflow:hidden}
::slotted([slot=lead]){align-self:center;margin-left:2px}
svg{position:absolute;right:3px;top:6px;width:11px;height:8px;pointer-events:none}</style>
<slot name="lead"></slot><slot></slot><svg viewBox="0 0 11 8"><path d="M1.500 1.500L5.500 5.500L9.500 1.500" fill="none" stroke="#555"/></svg>`);

def('icon-button', e => `<style>:host{display:block;flex:none}button{display:flex;align-items:center;justify-content:center;box-sizing:border-box;width:25px;height:21px;margin:0;padding:0;border:1px solid #adadad;background:#e1e1e1}
button:disabled{background:#ccc;border-color:#bfbfbf}</style><button ${e.hasAttribute('off') ? 'disabled' : ''} aria-label="${e.getAttribute('icon')}"><ui-icon name="${e.getAttribute('icon')}"></ui-icon></button>`);

def('section-view', () => `<style>:host{display:block;box-sizing:border-box;border:solid #8a8a8a;border-width:1px 0 0 1px;background:linear-gradient(to top right,#fff 20%,#fffdf6 50%,#f9f4e2 85%,#fbf7e8)}svg{display:block;width:100%;height:200px}text{font:11px "Liberation Sans",sans-serif}.ax{font:bold 9px "Liberation Mono",monospace;fill:#f0f}</style>
<svg viewBox="347 494 282 200" preserveAspectRatio="xMinYMin meet"><defs><pattern id="h" width="7" height="7" patternUnits="userSpaceOnUse"><rect width="7" height="7" fill="#6464fa"/><path d="M-1-1L8 8M-1 6L1 8M6-1L8 1" stroke="#d4d4ff" stroke-width="1.200"/></pattern></defs>
<text x="352" y="507">HEB 400</text>
<path d="M436.500 524.500H528.500V531.500H494Q484.500 532 484.500 541V630Q484.500 639 494 639.500H528.500V646.500H436.500V639.500H471Q480.500 639 480.500 630V541Q480.500 532 471 531.500H436.500Z" fill="url(#h)" stroke="#000"/>
<path d="M482.500 585.500H558" stroke="#f0f" stroke-dasharray="9 3 2 3"/><path d="M558 582.500V588.500L563 585.500Z" fill="#f0f"/>
<path d="M482.500 585.500V662" stroke="#f0f" stroke-dasharray="9 3 2 3"/><path d="M479.500 661.500H485.500L482.500 667Z" fill="#f0f"/><rect x="481" y="584" width="3" height="3" fill="#f0f"/>
<text class="ax" x="564" y="594">y</text><text class="ax" x="484" y="674">z</text></svg>`);

def('edit-dialog', e => {
  const g = a => e.getAttribute(a), ib = (i, off) => `<icon-button icon="${i}" ${off ? 'off' : ''}></icon-button>`;
  const sel = (id, t, cls = '', lead = '', off = false) => `<ui-combo class="${cls}" ${off ? 'off' : ''}>${lead}<select id="${id}" ${off ? 'disabled' : ''}><option>${t}</option></select></ui-combo>`;
  return `<style>:host{display:flex;flex-direction:column;box-sizing:border-box;width:622px;height:528px;border:1px solid #5c5d60;background:#efefef;box-shadow:0 3px 12px rgba(0,0,0,.28);font:11px/14px "Liberation Sans",sans-serif}
header{display:flex;align-items:center;justify-content:space-between;box-sizing:border-box;height:25px;padding:0 9px 2px 3px;background:#fff}
h2{margin:0;font:11px/18px "Open Sans",sans-serif}
.x{width:12px;height:12px;border:0;padding:0;background:none}.x svg{display:block}
.tabs{display:flex;align-items:flex-end;margin:6px 8px 0 6px;height:21px}
.tabs button{box-sizing:border-box;height:18px;margin:0;border:1px solid #d9d9d9;border-width:1px 1px 0 0;background:#efefef;padding:1px 4px 0;font:11px/17px "Liberation Sans",sans-serif;color:#000;white-space:nowrap}
.tabs .on{height:21px;width:46px;background:#fff;border-left-width:1px;text-align:left;padding:0 0 1px 6px}
.page{flex:1;box-sizing:border-box;display:flex;flex-direction:column;gap:10px;margin:0 8px 0 6px;padding:9px 5px 8px 8px;border:1px solid #dcdcdc;border-top-color:#e6e6e6;background:#fff}
.top{display:grid;grid-template-columns:300px 1fr;column-gap:7px;height:256px}
.l,.r{display:flex;flex-direction:column;gap:9px;min-height:0}.two{display:flex;gap:8px}.two>:first-child{width:109px}.two>:last-child{flex:1}
.rot,section-view{flex:1;min-height:0}
.row{display:flex;gap:4px}.row ui-combo{flex:1}.row .w63,.w63{flex:none;width:63px}.rt{padding-right:30px}
input[type=text]{box-sizing:border-box;height:20px;margin:0;border:1px solid #7a7a7a;padding:0 3px;background:#efefef;font:inherit;color:#000;border-radius:0;box-shadow:inset 0 0 0 1px #fff}
.n{width:45px;text-align:right}.node{width:100%}.nodes{position:relative}
.nodes i{position:absolute;left:-6px;top:-5px;width:46px;height:24px;border:3px solid #c00000}
.g{display:grid;grid-template-columns:90px 27px auto 1fr;height:24px;margin-bottom:7px;align-items:center}.g.s{height:19px;margin-bottom:0}.g.m{margin-top:9px}
.g label{display:flex;align-items:center;gap:3px;white-space:nowrap}.g .t{padding-left:17px}.dis{color:#9a9a9a}
input[type=radio]{appearance:none;box-sizing:border-box;flex:none;width:13px;height:13px;margin:0;border:1px solid #333;border-radius:50%;background:#fff}
input[type=radio]:checked{background:radial-gradient(circle,#222 3px,#fff 4px)}
input[type=radio]:disabled{border-color:#b8b8b8}input[type=radio]:disabled:checked{background:radial-gradient(circle,#b8b8b8 3px,#fff 4px)}
.spin{display:flex;box-sizing:border-box;width:83px;height:20px;border:1px solid #7f9db9;background:#fff}
.spin input[type=text]{flex:1;min-width:0;height:18px;border:0;background:none;text-align:right;padding:0 2px}
.spin svg{width:25px;height:18px;flex:none}
.f{display:flex;gap:5px}.f .w63{margin-right:-1px}.unit{padding-left:5px}
.end{display:flex;justify-content:flex-end}
.line{display:grid;grid-template-columns:76px 382px 25px 25px 25px 25px;column-gap:5px;align-items:center;height:21px}
.line label{white-space:nowrap}.line ui-combo{margin:0 -2px 0 -3px}
.line+.line{margin-top:3px}
.sw{width:11px;height:11px;border:1px solid #333;background:#6496fa;flex:none}.sw.e{width:9px;height:9px;background:#6464fa;position:absolute;right:21px;top:4px}
.ib{width:12px;height:12px;margin-left:3px!important}
footer{display:flex;gap:10px;padding:9px 7px 7px 6px}footer .sp{flex:1}
footer button{box-sizing:border-box;width:73px;height:21px;margin:0;padding:0;border:1px solid #adadad;background:#e1e1e1;font:11px/18px "Liberation Sans",sans-serif;color:#000}
footer .ok{border:2px solid #0078d7;line-height:16px}</style>
<header><h2>Editar barra</h2><button class="x" aria-label="Fechar"><svg width="12" height="12"><path d="M1 1L11 11M11 1L1 11" stroke="#111" stroke-width="1.200"/></svg></button></header>
<div class="tabs"><button class="on">Geral</button><button>Opções</button><button>Comprimentos efetivos</button><button>Modificar rigidez</button></div>
<div class="page"><div class="top"><div class="l">
<div class="two"><group-box label="Barra nº"><input class="n" type="text" value="${g('bar')}" readonly aria-label="Barra nº"></group-box>
<group-box label="Linha nº"><div class="row">${sel('ln', g('line'), 'w63')}${ib('pick')}</div></group-box></div>
<group-box label="Nó nº"><div class="nodes"><input class="node" type="text" value="${g('nodes')}" readonly aria-label="Nó nº"><i></i></div></group-box>
<group-box class="rot" label="Rotação da barra através">
<div class="g"><label><input type="radio" name="r" checked>Ângulo</label><label for="beta">β:</label><div class="spin"><input id="beta" type="text" value="0.00"><svg viewBox="0 0 25 18"><rect x=".5" y="1.500" width="12" height="7" fill="#eee" stroke="#aaa"/><rect x=".5" y="9.500" width="12" height="7" fill="#eee" stroke="#aaa"/><rect x="14.500" y="1.500" width="8" height="15" fill="#eee" stroke="#999"/><path d="M4 6.500H10L7 3.500ZM4 11.500H10L7 14.500ZM17 6V12L20 9Z"/></svg></div><span class="unit">[°]</span></div>
<div class="g"><label><input type="radio" name="r">Nó auxiliar</label><label for="aux" class="dis">Nº:</label><div class="f">${sel('aux', 'Dentro', 'w63', '', true)}${ib('pickG', 1)}${ib('newwG', 1)}</div></div>
<div class="g s m dis"><span class="t">No plano:</span><label><input type="radio" name="p" checked disabled>x-y</label></div>
<div class="g s dis"><span></span><label><input type="radio" name="p" disabled>x-z</label></div>
<div class="end">${ib('info')}</div></group-box></div>
<div class="r"><group-box label="Tipo de barra:"><div class="row rt">${sel('ty', 'Viga', '', '<span slot="lead" class="sw"></span>')}${ib('handG', 1)}</div></group-box><section-view></section-view></div></div>
<group-box label="Secção:"><div class="line"><label for="s1">Início da barra:</label>${sel('s1', '&nbsp;1&nbsp;&nbsp;|&nbsp;&nbsp;HEB 400&nbsp;&nbsp;|&nbsp;&nbsp;Aço S 235', '', '<span slot="lead" class="sw"></span><svg slot="lead" class="ib" viewBox="0 0 12 12"><path d="M0 1H12M0 11H12M6 1V11" stroke="#3c4c90" stroke-width="1.800" fill="none"/></svg><span slot="lead" class="sw e"></span>')}${ib('book')}${ib('neww')}${ib('hand')}${ib('info')}</div>
<div class="line"><label for="s2">Fim da barra:</label>${sel('s2', 'Como início da barra')}${ib('book')}${ib('neww')}${ib('handG', 1)}${ib('infoG', 1)}</div></group-box>
<group-box label="Articulação de barra"><div class="line"><label for="a1">Início da barra:</label>${sel('a1', 'Nenhum')}${ib('neww')}${ib('handG', 1)}</div>
<div class="line"><label for="a2">Fim da barra:</label>${sel('a2', 'Nenhum')}${ib('neww')}${ib('handG', 1)}</div></group-box></div>
<footer>${ib('help')}${g('bar') === '1' ? ib('editG', 1) : ib('edit')}${ib('units')}${ib('pickdoc')}<div class="sp"></div><button class="ok">OK</button><button>Cancelar</button></footer>`;
});

def('rfem-app', () => `<style>:host{display:flex;flex-direction:column;height:100vh;min-width:1300px}
main{position:relative;flex:1;display:flex;min-height:0}.col{flex:1;min-width:0;display:flex;flex-direction:column}
.d1,.d2{position:absolute}.d1{left:23px;top:276px}.d2{left:645px;top:278px}</style>
<title-bar>RFEM 5.23.01 x64 - [004632-model-file*]</title-bar><menu-bar></menu-bar><tool-area></tool-area>
<main><side-strip>Navegador de projetos - Dados</side-strip><div class="col"><model-view></model-view><table-dock></table-dock></div>
<edit-dialog class="d1" bar="1" line="15 - Geral" nodes="12,13"></edit-dialog><edit-dialog class="d2" bar="2" line="16 - Geral" nodes="14,15"></edit-dialog></main>
<status-bar></status-bar>`);
</script>
</body>
</html>
